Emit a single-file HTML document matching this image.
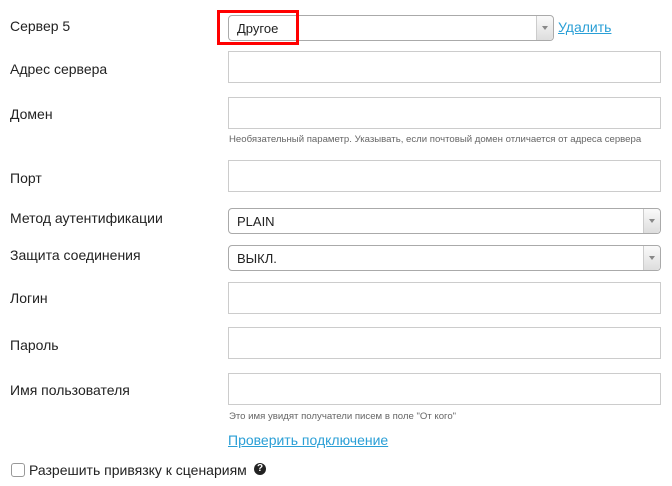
<!DOCTYPE html>
<html><head><meta charset="utf-8"><style>
body{margin:0;width:672px;height:486px;background:#fff;font-family:"Liberation Sans",Arial,sans-serif;color:#222;position:relative;overflow:hidden}
.l{position:absolute;left:10px;font-size:14px;line-height:16px}
.in{position:absolute;left:228px;width:431px;height:30px;border:1px solid #ccc;background:#fff}
.sel{position:absolute;left:228px;width:431px;height:24px;border:1px solid #aaa;border-radius:4px;background:#fff;font-size:13px;line-height:24px;box-sizing:content-box}
.sel span{position:absolute;left:8px;top:1px}
.sel .ar{position:absolute;right:0;top:0;width:16px;height:24px;border-left:1px solid #ccc;background:linear-gradient(#fafafa,#ddd);border-radius:0 4px 4px 0}
.sel .ar:after{content:"";position:absolute;left:5px;top:10px;border-left:3px solid transparent;border-right:3px solid transparent;border-top:4px solid #888}
.hint{position:absolute;left:229px;font-size:9.6px;color:#666}
a{color:#2a9fd6;text-decoration:underline;position:absolute}
</style></head><body>
<div class="l" style="top:18px">Сервер 5</div>
<div class="sel" style="top:15px;width:324px"><span>Другое</span><div class="ar"></div></div>
<div style="position:absolute;left:217px;top:10px;width:76px;height:29px;border:3px solid #f00"></div>
<a style="left:558px;top:19px;font-size:14px">Удалить</a>

<div class="l" style="top:61px">Адрес сервера</div>
<div class="in" style="top:51px"></div>
<div class="l" style="top:106px">Домен</div>
<div class="in" style="top:97px"></div>
<div class="hint" style="top:134px">Необязательный параметр. Указывать, если почтовый домен отличается от адреса сервера</div>
<div class="l" style="top:170px">Порт</div>
<div class="in" style="top:160px"></div>
<div class="l" style="top:210px">Метод аутентификации</div>
<div class="sel" style="top:208px"><span>PLAIN</span><div class="ar"></div></div>
<div class="l" style="top:247px">Защита соединения</div>
<div class="sel" style="top:245px"><span>ВЫКЛ.</span><div class="ar"></div></div>
<div class="l" style="top:290px">Логин</div>
<div class="in" style="top:282px"></div>
<div class="l" style="top:337px">Пароль</div>
<div class="in" style="top:327px"></div>
<div class="l" style="top:382px">Имя пользователя</div>
<div class="in" style="top:373px"></div>
<div class="hint" style="top:411px">Это имя увидят получатели писем в поле "От кого"</div>
<a style="left:228px;top:432px;font-size:14px">Проверить подключение</a>
<div style="position:absolute;left:11px;top:463px;width:12px;height:12px;border:1px solid #999;border-radius:3px"></div>
<div class="l" style="left:29px;top:462px">Разрешить привязку к сценариям</div>
<div style="position:absolute;left:254px;top:463px;width:12px;height:12px;border-radius:50%;background:#222;color:#fff;font-size:10px;font-weight:bold;line-height:12px;text-align:center">?</div>
</body></html>
